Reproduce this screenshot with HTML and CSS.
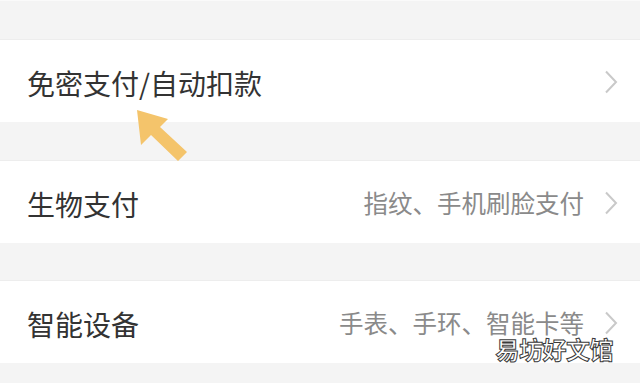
FILE: index.html
```html
<!DOCTYPE html>
<html lang="zh">
<head>
<meta charset="utf-8">
<link rel="stylesheet" href="styles.css">
</head>
<body>
<div class="page">
  <div class="topline"></div>
  <div class="row">
    <span class="title">免密支付/自动扣款</span>
    <span class="right">
      <svg class="chev" viewBox="0 0 14 24"><path d="M2 1.5 L12 12 L2 22.5" fill="none" stroke="#c9c9c9" stroke-width="2"/></svg>
    </span>
  </div>
  <div class="row">
    <span class="title">生物支付</span>
    <span class="right">
      <span class="desc">指纹、手机刷脸支付</span>
      <svg class="chev" viewBox="0 0 14 24"><path d="M2 1.5 L12 12 L2 22.5" fill="none" stroke="#c9c9c9" stroke-width="2"/></svg>
    </span>
  </div>
  <div class="row third">
    <span class="title">智能设备</span>
    <span class="right">
      <span class="desc">手表、手环、智能卡等</span>
      <svg class="chev" viewBox="0 0 14 24"><path d="M2 1.5 L12 12 L2 22.5" fill="none" stroke="#c9c9c9" stroke-width="2"/></svg>
    </span>
  </div>
  <svg class="arrow" viewBox="0 0 640 383" width="640" height="383">
    <polygon points="137,110 168,119 160,127 187,152 178,161 151,135 141,145" fill="#f4c46b"/>
  </svg>
  <div class="watermark">易坊好文馆</div>
</div>
</body>
</html>
```
FILE: styles.css
```css
html, body {
  margin: 0;
  padding: 0;
}
body {
  background: #f4f4f4;
  font-family: "Noto Sans CJK SC", "Noto Sans", sans-serif;
}
.page {
  position: relative;
  width: 640px;
  height: 383px;
  overflow: hidden;
  display: flex;
  flex-direction: column;
  gap: 38px;
}
.topline {
  height: 1px;
  background: #fafafa;
}
.row {
  height: 83px;
  flex-shrink: 0;
  background: #fff;
  display: flex;
  align-items: center;
  justify-content: space-between;
  padding: 0 22px 0 27px;
  box-sizing: border-box;
  border-top: 1px solid #ededed;
}
.third {
  margin-top: -1px;
}
.title {
  font-size: 28px;
  color: #333;
  line-height: 1;
  padding-top: 3px;
}
.right {
  display: flex;
  align-items: center;
  gap: 20px;
}
.desc {
  font-size: 24.5px;
  color: #8a8a8a;
  line-height: 1;
  padding-top: 2px;
}
.chev {
  width: 14px;
  height: 24px;
  margin-top: 2px;
}
.arrow {
  position: absolute;
  left: 0;
  top: 0;
  pointer-events: none;
}
.watermark {
  position: absolute;
  right: 27px;
  top: 335px;
  font-size: 24px;
  line-height: 1.2;
  color: #fff;
  font-weight: bold;
  -webkit-text-stroke: 1px #3a3a3a;
  letter-spacing: -0.5px;
}
```
